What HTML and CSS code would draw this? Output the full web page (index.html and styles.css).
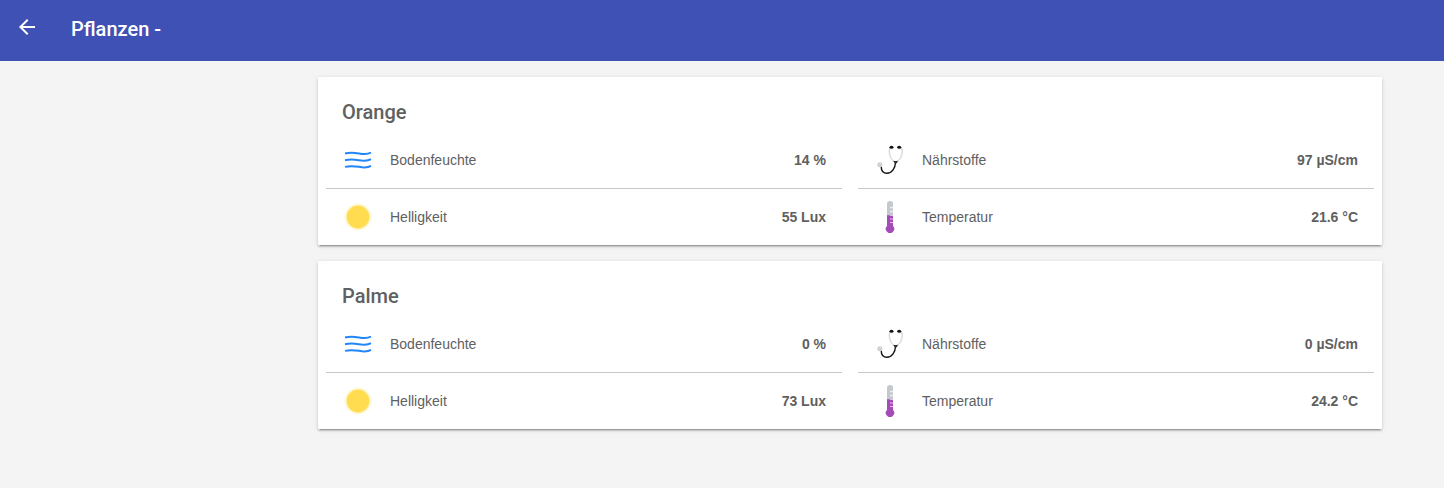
FILE: index.html
```html
<!DOCTYPE html>
<html lang="de">
<head>
<meta charset="utf-8">
<meta name="viewport" content="width=device-width, initial-scale=1">
<title>Pflanzen</title>
<link rel="stylesheet" href="styles.css">
</head>
<body>
<svg class="sprite" aria-hidden="true">
  <symbol id="moisture" viewBox="0 0 32 32">
    <g fill="none" stroke="#2086fa" stroke-width="2">
      <path d="M3 9.500C10 7.800 15 9.300 20 9.900Q26 10.400 29 8.500"/>
      <path d="M3 16.200C10 14.500 15 16 20 16.600Q26 17.100 29 15.200"/>
      <path d="M3 22.900C10 21.200 15 22.700 20 23.300Q26 23.800 29 21.900"/>
    </g>
  </symbol>
  <symbol id="light" viewBox="0 0 32 32">
    <circle cx="16" cy="16" r="14" fill="#fffcec"/>
    <circle cx="16" cy="16" r="12.800" fill="#fff6d0"/>
    <circle cx="16" cy="16" r="11.400" fill="#ffdc50"/>
  </symbol>
  <symbol id="nutrients" viewBox="0 0 32 32">
    <g fill="none">
      <path d="M17 3.200C15.300 3.400 15.300 5 15.300 7C15.300 12 17.500 17 21.600 17.800C26 17 28.200 12 28.200 7C28.200 5 28 3.400 26 3.200" stroke="#dadada" stroke-width="1.400"/>
      <path d="M21.600 18C21.300 24 18 29.300 13 29.300C9 29.300 7.200 26.500 7.200 22.500" stroke="#151515" stroke-width="1.400"/>
    </g>
    <path d="M19.300 17h4.800l-1.600 2.600h-1.700z" fill="#333"/>
    <ellipse cx="17.500" cy="3.200" rx="2" ry="1.500" fill="#111"/>
    <ellipse cx="25.200" cy="3.200" rx="2" ry="1.500" fill="#111"/>
    <circle cx="5.800" cy="20.700" r="2.500" fill="#cfd1d2"/>
  </symbol>
  <symbol id="temperature" viewBox="0 0 32 32">
    <path d="M13 15V3a3 3 0 0 1 6 0v12z" fill="#c3c9cd"/>
    <path d="M13 14.300h6v10.600a4.200 4.200 0 1 1-6 0z" fill="#a54bb8"/>
    <path d="M16 6.500h3M16 10.500h3" stroke="#eceeef" stroke-width="1.300"/>
    <path d="M16 14.500h3M16 18h3M16 21.500h3" stroke="#e2c4e8" stroke-width="1.200"/>
  </symbol>
</svg>

<header class="toolbar">
  <button class="back" type="button" aria-label="Zurück">
    <svg class="back-icon" viewBox="0 0 24 24" aria-hidden="true"><path fill="currentColor" d="M20 11H7.830l5.590-5.590L12 4l-8 8 8 8 1.410-1.410L7.830 13H20v-2z"/></svg>
  </button>
  <h1 class="toolbar-title">Pflanzen -</h1>
</header>

<main class="content">
  <div class="cards">
    <section class="card">
      <h2 class="card-title">Orange</h2>
      <ul class="readings">
        <li class="reading"><svg class="icon" aria-hidden="true"><use href="#moisture"/></svg><span class="label">Bodenfeuchte</span><strong class="value">14 %</strong></li>
        <li class="reading"><svg class="icon" aria-hidden="true"><use href="#nutrients"/></svg><span class="label">Nährstoffe</span><strong class="value">97 µS/cm</strong></li>
        <li class="reading"><svg class="icon" aria-hidden="true"><use href="#light"/></svg><span class="label">Helligkeit</span><strong class="value">55 Lux</strong></li>
        <li class="reading"><svg class="icon" aria-hidden="true"><use href="#temperature"/></svg><span class="label">Temperatur</span><strong class="value">21.6 °C</strong></li>
      </ul>
    </section>
    <section class="card">
      <h2 class="card-title">Palme</h2>
      <ul class="readings">
        <li class="reading"><svg class="icon" aria-hidden="true"><use href="#moisture"/></svg><span class="label">Bodenfeuchte</span><strong class="value">0 %</strong></li>
        <li class="reading"><svg class="icon" aria-hidden="true"><use href="#nutrients"/></svg><span class="label">Nährstoffe</span><strong class="value">0 µS/cm</strong></li>
        <li class="reading"><svg class="icon" aria-hidden="true"><use href="#light"/></svg><span class="label">Helligkeit</span><strong class="value">73 Lux</strong></li>
        <li class="reading"><svg class="icon" aria-hidden="true"><use href="#temperature"/></svg><span class="label">Temperatur</span><strong class="value">24.2 °C</strong></li>
      </ul>
    </section>
  </div>
</main>
</body>
</html>
```

FILE: styles.css
```css
* {
  box-sizing: border-box;
}

body {
  margin: 0;
  min-height: 100vh;
  background: #f4f4f4;
  color: #606060;
  font-family: "Liberation Sans", Arial, sans-serif;
  font-size: 14px;
  line-height: 20px;
}

.sprite {
  display: none;
}

.toolbar {
  display: flex;
  align-items: flex-start;
  gap: 32px;
  padding: 15px;
  padding-bottom: 20px;
  background: #3f51b5;
  color: #fff;
}

.back {
  display: block;
  padding: 0;
  border: 0;
  background: none;
  color: inherit;
  cursor: pointer;
}

.back-icon {
  display: block;
  width: 24px;
  height: 24px;
}

.toolbar-title {
  margin: 0;
  padding-top: 2px;
  font: 500 20px/24px Roboto, sans-serif;
}

.content {
  padding: 16px 8px 16px 264px;
}

.cards {
  display: grid;
  gap: 16px;
  max-width: 1064px;
  margin: 0 auto;
}

.card {
  padding: 0 8px;
  border-radius: 1px;
  background: #fff;
  box-shadow:
    0 3px 1px -2px rgba(0, 0, 0, 0.2),
    0 2px 2px 0 rgba(0, 0, 0, 0.14),
    0 1px 5px 0 rgba(0, 0, 0, 0.12);
}

.card-title {
  margin: 0;
  padding: 23px 16px 8px;
  font: 500 20px/24px Roboto, sans-serif;
}

.readings {
  display: grid;
  grid-template-columns: 1fr 1fr;
  column-gap: 16px;
  margin: 0;
  padding: 0;
  list-style: none;
}

.reading {
  display: flex;
  align-items: center;
  gap: 16px;
  padding: 12px 16px;
}

.reading:nth-child(-n + 2) {
  border-bottom: 1px solid #c8c8c8;
}

.icon {
  flex: none;
  width: 32px;
  height: 32px;
}

.value {
  margin-left: auto;
}
```
